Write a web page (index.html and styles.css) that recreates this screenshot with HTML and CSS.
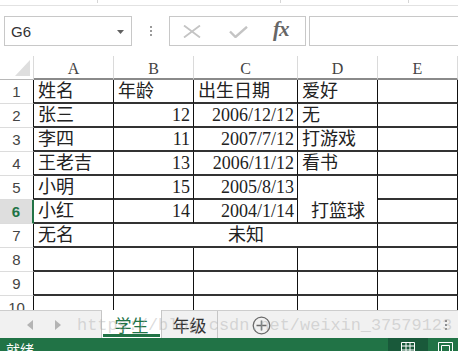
FILE: index.html
```html
<!DOCTYPE html>
<html>
<head>
<meta charset="utf-8">
<link rel="stylesheet" href="styles.css">
</head>
<body>
<div class="app">
  <div class="ribbon"><i class="tick t1"></i><i class="tick t2"></i><i class="tick t3"></i></div>
  <div class="fbar">
    <div class="namebox"><span class="ref">G6</span><svg class="caret" width="7" height="4" viewBox="0 0 7 4"><polygon points="0,0 7,0 3.5,4" fill="#606060"/></svg></div>
    <div class="vdots"><i></i><i></i><i></i></div>
    <div class="fbtns">
      <svg class="ico-x" width="18" height="13" viewBox="0 0 18 13"><path d="M1 0.5 L17 12.5 M17 0.5 L1 12.5" stroke="#c4c4c4" stroke-width="1.8" fill="none"/></svg>
      <svg class="ico-ok" width="19" height="12" viewBox="0 0 19 12"><path d="M1 5.5 L6.5 11 L18 0.8" stroke="#c4c4c4" stroke-width="2.4" fill="none"/></svg>
      <span class="fx">fx</span>
    </div>
    <div class="finput"></div>
  </div>
  <div class="sheet">
    <div class="grid">
      <div class="corner"><svg width="15" height="16" viewBox="0 0 15 16"><polygon points="15,0 15,16 0,16" fill="#dedede"/></svg></div>
      <div class="ch">A</div><div class="ch">B</div><div class="ch">C</div><div class="ch">D</div><div class="ch">E</div>

      <div class="rh">1</div><div class="c">姓名</div><div class="c">年龄</div><div class="c">出生日期</div><div class="c">爱好</div><div class="c"></div>
      <div class="rh">2</div><div class="c">张三</div><div class="c num">12</div><div class="c num">2006/12/12</div><div class="c">无</div><div class="c"></div>
      <div class="rh">3</div><div class="c">李四</div><div class="c num">11</div><div class="c num">2007/7/12</div><div class="c">打游戏</div><div class="c"></div>
      <div class="rh">4</div><div class="c">王老吉</div><div class="c num">13</div><div class="c num">2006/11/12</div><div class="c">看书</div><div class="c"></div>
      <div class="rh">5</div><div class="c">小明</div><div class="c num">15</div><div class="c num">2005/8/13</div><div class="c center rows2">打篮球</div><div class="c"></div>
      <div class="rh sel">6</div><div class="c">小红</div><div class="c num">14</div><div class="c num">2004/1/14</div><div class="c"></div>
      <div class="rh">7</div><div class="c">无名</div><div class="c center cols3">未知</div><div class="c"></div>
      <div class="rh">8</div><div class="c"></div><div class="c"></div><div class="c"></div><div class="c"></div><div class="c"></div>
      <div class="rh">9</div><div class="c"></div><div class="c"></div><div class="c"></div><div class="c"></div><div class="c"></div>
      <div class="rh">10</div><div class="c"></div><div class="c"></div><div class="c"></div><div class="c"></div><div class="c"></div>
    </div>
  </div>
  <div class="tabs">
    <div class="nav">
      <svg width="6" height="10" viewBox="0 0 6 10"><polygon points="6,0 6,10 0,5" fill="#b4b4b4"/></svg>
      <svg width="6" height="10" viewBox="0 0 6 10"><polygon points="0,0 0,10 6,5" fill="#b4b4b4"/></svg>
    </div>
    <div class="tab active">学生</div>
    <div class="tab">年级</div>
    <div class="addarea">
      <svg class="add" width="19" height="19" viewBox="0 0 19 19"><circle cx="9.5" cy="9.5" r="8.3" stroke="#6a6a6a" stroke-width="1.3" fill="none"/><path d="M9.5 4.5 V14.5 M4.5 9.5 H14.5" stroke="#6a6a6a" stroke-width="1.5"/></svg>
      <div class="hdots"><i></i><i></i><i></i></div>
    </div>
  </div>
  <div class="status">
    <span class="ready">就绪</span>
    <div class="views">
      <div class="view on"><svg width="14" height="11" viewBox="0 0 14 11"><path d="M0.5 0.5 H13.5 V11 M0.5 0.5 V11 M0.5 4 H13.5 M0.5 8 H13.5 M5 0.5 V11 M9 0.5 V11" stroke="#fff" stroke-width="1" fill="none"/></svg></div>
      <div class="view"><svg width="15" height="11" viewBox="0 0 15 11"><path d="M0.5 0.5 H14.5 V11 M0.5 0.5 V11 M3.5 3.5 H11.5 V11 M3.5 3.5 V11" stroke="#fff" stroke-width="1" fill="none"/></svg></div>
    </div>
  </div>
  <div class="watermark">https://blog.csdn.net/weixin_37579123</div>
</div>
</body>
</html>
```

FILE: styles.css
```css
* { box-sizing: border-box; }
html, body { margin: 0; padding: 0; }
body { width: 458px; height: 351px; overflow: hidden; background: #fff; }
.app { position: relative; width: 458px; height: 351px; overflow: hidden; font-family: "Liberation Sans", "Noto Sans CJK SC", sans-serif; }

.ribbon { height: 6px; border-bottom: 1px solid #e2e2e2; display: flex; align-items: flex-start; }
.tick { display: block; width: 1px; height: 3px; background: #d6d6d6; }
.t1 { margin-left: 97px; }
.t2 { margin-left: 182px; }
.t3 { margin-left: 127px; }

.fbar { margin-top: 10px; height: 30px; display: flex; padding-left: 4px; }
.namebox { width: 128px; height: 30px; border: 1px solid #c8c8c8; display: flex; align-items: center; padding-left: 6px; padding-right: 7px; }
.ref { font-family: "Liberation Sans", sans-serif; font-size: 15px; color: #333; flex: 1; padding-top: 1px; }
.caret { margin-top: 1px; }
.vdots { width: 37px; display: flex; flex-direction: column; align-items: center; justify-content: center; gap: 2px; }
.vdots i { display: block; width: 2px; height: 2px; background: #9a9a9a; }
.fbtns { width: 137px; height: 30px; border: 1px solid #c8c8c8; display: flex; align-items: center; padding-left: 13px; }
.ico-x { margin-right: 28px; }
.ico-ok { margin-right: 25px; margin-top: 1px; }
.fx { font-family: "Liberation Serif", serif; font-style: italic; font-weight: bold; font-size: 21px; color: #666; margin-top: -3px; letter-spacing: -1px; }
.finput { flex: 1; height: 30px; margin-left: 3px; margin-right: -2px; border: 1px solid #c8c8c8; }

.sheet { margin-top: 10px; height: 254px; overflow: hidden; }
.grid { display: grid; grid-template-columns: 34px 80px 80px 104px 80px 80px; grid-auto-rows: 24px; }
.corner { border-right: 1px solid #dadada; border-bottom: 1px solid #b8b8b8; display: flex; justify-content: flex-end; align-items: flex-end; padding-right: 3px; padding-bottom: 3px; }
.ch { border-right: 1px solid #dadada; border-bottom: 2px solid #8a8a8a; font-family: "Liberation Serif", serif; font-size: 16px; color: #444; display: flex; justify-content: center; align-items: center; padding-top: 3px; }
.rh { border-right: 1px solid #111; border-bottom: 1px solid #dcdcdc; font-family: "Liberation Sans", sans-serif; font-size: 15px; color: #444; display: flex; justify-content: center; align-items: center; }
.rh.sel { background: #dedede; color: #217346; font-weight: bold; border-right: 2px solid #217346; }
.c { border-right: 1px solid #111; border-bottom: 2px solid #333; font-family: "Liberation Serif", "Noto Sans CJK SC", serif; font-size: 18px; color: #222; line-height: 22px; display: flex; align-items: flex-end; padding-left: 4px; padding-right: 3px; white-space: nowrap; overflow: hidden; }
.c.num { justify-content: flex-end; }
.c.center { justify-content: center; }
.rows2 { grid-row: span 2; }
.cols3 { grid-column: span 3; }

.tabs { height: 28px; background: #f1f1f1; border-top: 1px solid #cdcdcd; display: flex; }
.nav { width: 102px; border-right: 1px solid #c6c6c6; display: flex; align-items: center; padding-left: 27px; gap: 22px; }
.tab { height: 27px; display: flex; align-items: center; justify-content: center; font-family: "Noto Sans CJK SC", sans-serif; font-size: 17px; color: #333; border-right: 1px solid #c6c6c6; }
.tab.active { width: 60px; background: #fff; color: #217346; margin-top: -1px; height: 28px; position: relative; }
.tab.active::after { content: ""; position: absolute; left: 1px; right: 1px; bottom: 1px; height: 3px; background: #217346; }
.tab:not(.active) { width: 56px; }
.addarea { flex: 1; display: flex; align-items: center; padding-left: 34px; }
.add { margin-top: 1px; }
.hdots { margin-left: auto; margin-right: 11px; display: flex; flex-direction: column; gap: 2px; }
.hdots i { display: block; width: 2px; height: 2px; background: #8a8a8a; }

.status { height: 22px; background: #217346; display: flex; align-items: flex-start; }
.ready { font-family: "Noto Sans CJK SC", sans-serif; font-size: 14px; color: #fff; padding-left: 6px; line-height: 18px; margin-top: 2px; }
.views { margin-left: auto; display: flex; }
.view { width: 40px; height: 22px; display: flex; justify-content: center; padding-top: 4px; }
.view.on { background: #19593a; width: 40px; margin-right: 10px; }
.view:not(.on) { width: 20px; justify-content: flex-start; }

.watermark { position: absolute; left: 77px; top: 316px; font-family: "Liberation Mono", monospace; font-size: 16.9px; line-height: 20px; color: rgba(175, 175, 175, 0.45); white-space: nowrap; pointer-events: none; }
```
